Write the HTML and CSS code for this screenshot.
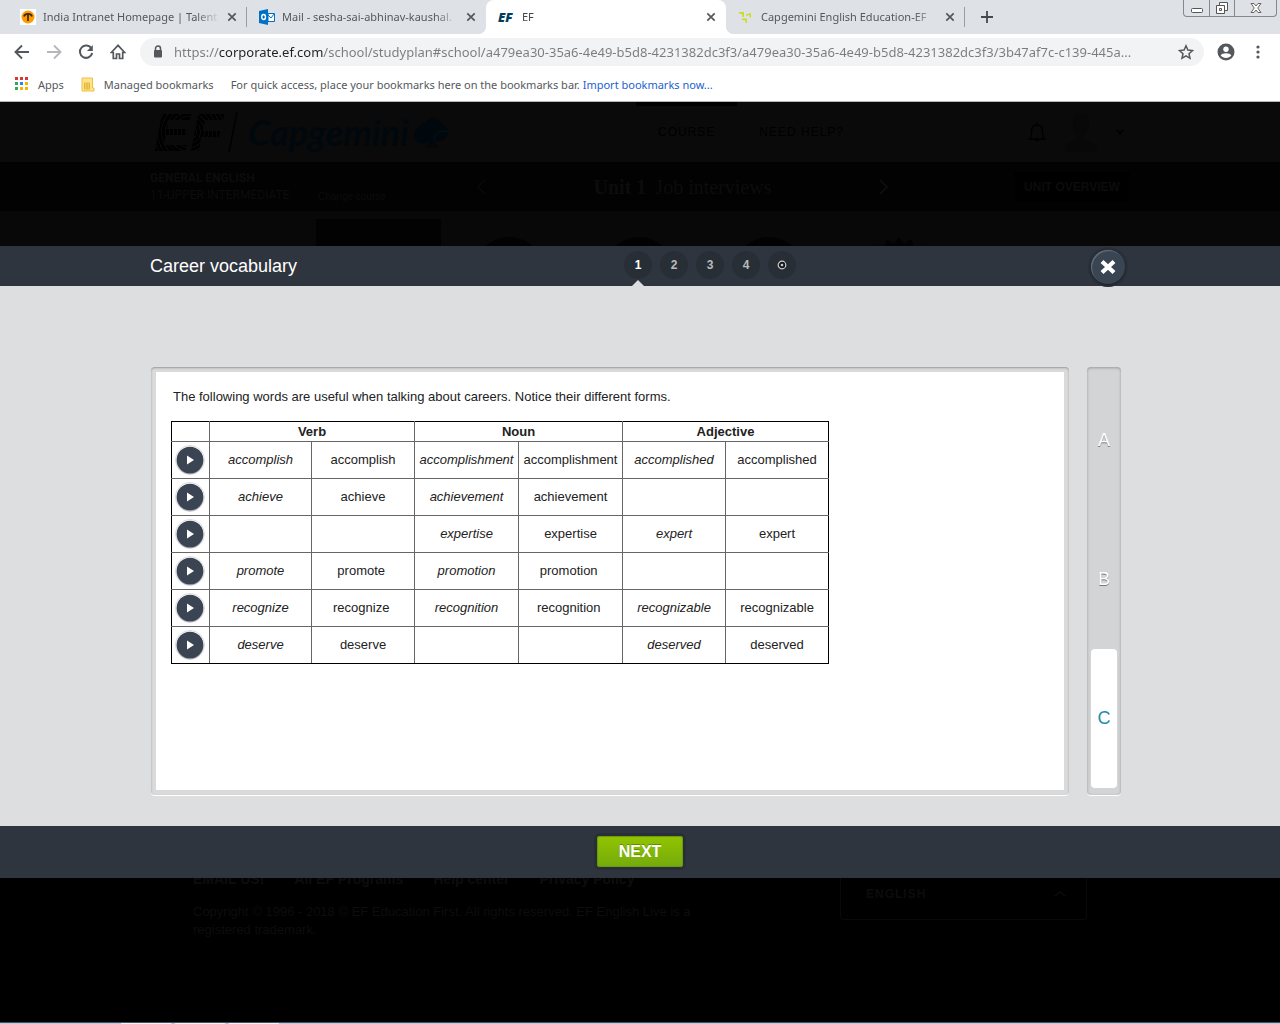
FILE: index.html
```html
<!DOCTYPE html>
<html lang="en">
<head>
<meta charset="utf-8">
<meta name="viewport" content="width=device-width, initial-scale=1">
<title>EF</title>
<link rel="stylesheet" href="styles.css">
</head>
<body>
<svg class="sprite" aria-hidden="true">
  <symbol id="cross" viewBox="0 0 10 10"><path d="M1.3 1.3l7.4 7.4M8.7 1.3L1.3 8.7" fill="none" stroke="#54585c" stroke-width="1.7"/></symbol>
  <symbol id="play" viewBox="0 0 32 32">
    <circle cx="16" cy="16" r="14.5" fill="#fff" stroke="#dcdde0"/>
    <circle cx="16" cy="16.700" r="13.500" fill="#a9adb3"/>
    <circle cx="16" cy="16" r="13.300" fill="#3a4452"/>
    <path d="M13 11.500l7 4.500-7 4.500z" fill="#fff"/>
  </symbol>
</svg>

<header class="browser">
  <div class="tabstrip">
    <div class="tab tab-ruled">
      <svg width="16" height="16" viewBox="0 0 16 16"><path fill="#fff" d="M0 0h16v16H0z"/><circle cx="8" cy="8" r="6.500" fill="#f90"/><path d="M4 7.500c1-3.500 7-3.500 8 0M8 5v7" fill="none" stroke="#3a2a10" stroke-width="1.700"/></svg>
      <span class="tab-title">India Intranet Homepage | Talent</span>
      <button class="tab-close" aria-label="Close tab"><svg width="10" height="10"><use href="#cross"/></svg></button>
    </div>
    <div class="tab">
      <svg width="16" height="16" viewBox="0 0 16 16"><path fill="#fff" stroke="#0072c6" d="M8.500 4.500h7v8h-7z"/><path d="M9 6l3 3 3-4M9 5v7" fill="none" stroke="#0072c6"/><path fill="#0072c6" d="M0 2l9-2v16l-9-2z"/><ellipse cx="4.600" cy="8" rx="1.900" ry="2.500" fill="none" stroke="#fff" stroke-width="1.400"/></svg>
      <span class="tab-title">Mail - sesha-sai-abhinav-kaushal.</span>
      <button class="tab-close" aria-label="Close tab"><svg width="10" height="10"><use href="#cross"/></svg></button>
    </div>
    <div class="tab tab-active">
      <b class="ef-icon">EF</b>
      <span class="tab-title">EF</span>
      <button class="tab-close" aria-label="Close tab"><svg width="10" height="10"><use href="#cross"/></svg></button>
    </div>
    <div class="tab tab-ruled">
      <svg width="16" height="16" viewBox="0 0 16 16"><path fill="#cddc29" d="M1 3h5v5H4.500L4 5 1 4.500zM8 5.500L13 4v4.500h-1.500V6L8 7zM4 9.500h5V14H7.500v-2.500L4 11z"/></svg>
      <span class="tab-title">Capgemini English Education-EF</span>
      <button class="tab-close" aria-label="Close tab"><svg width="10" height="10"><use href="#cross"/></svg></button>
    </div>
    <button class="new-tab" aria-label="New tab"><svg width="12" height="12" viewBox="0 0 12 12"><path d="M6 0v12M0 6h12" stroke="#45494d" stroke-width="1.800"/></svg></button>
    <div class="window-controls">
      <button aria-label="Minimize"><svg width="14" height="16" viewBox="0 0 14 16"><rect x="1.500" y="8.500" width="11" height="4" rx="1" fill="#fff" stroke="#555"/></svg></button>
      <button aria-label="Restore"><svg width="14" height="16" viewBox="0 0 14 16"><g fill="#fff" stroke="#555"><path d="M4.500 2.500h8v8h-8z"/><path d="M1.500 5.500h8v8h-8z"/><path d="M4.500 8.500h2v2h-2z"/></g></svg></button>
      <button class="wide" aria-label="Close window"><svg width="14" height="16" viewBox="0 0 14 16"><path d="M2 3.500h3l2 2.500 2-2.500h3L8.700 8l3.300 4.500H9L7 10l-2 2.500H2L5.300 8z" fill="#fff" stroke="#666"/></svg></button>
    </div>
  </div>

  <div class="toolbar">
    <button aria-label="Back"><svg width="16" height="16" viewBox="0 0 16 16"><path d="M15 8H2M8 1.500L1.500 8 8 14.500" fill="none" stroke="#54585c" stroke-width="1.900"/></svg></button>
    <button aria-label="Forward"><svg width="16" height="16" viewBox="0 0 16 16"><path d="M1 8h13M8 1.500L14.500 8 8 14.500" fill="none" stroke="#b5b7ba" stroke-width="1.900"/></svg></button>
    <button aria-label="Reload"><svg width="16" height="16" viewBox="0 0 16 16"><path d="M13.500 4.500A6.200 6.200 0 1 0 14.200 9" fill="none" stroke="#54585c" stroke-width="2"/><path d="M14.800 1v6H9z" fill="#54585c"/></svg></button>
    <button aria-label="Home"><svg width="16" height="16" viewBox="0 0 16 16"><path d="M8 1.300L1.300 8.500h2v6h3.200v-4.500h3v4.500h3.200v-6h2z" fill="none" stroke="#54585c" stroke-width="1.700"/></svg></button>
    <div class="omnibox">
      <svg width="10" height="14" viewBox="0 0 10 14"><path d="M2.500 6V3.500a2.500 2.500 0 0 1 5 0V6" fill="none" stroke="#54585c" stroke-width="1.500"/><rect x="1" y="5" width="8" height="7.500" rx="1" fill="#54585c"/></svg>
      <input class="url" type="text" aria-label="Address" value="https://corporate.ef.com/school/studyplan#school/a479ea30-35a6-4e49-b5d8-4231382dc3f3/a479ea30-35a6-4e49-b5d8-4231382dc3f3/3b47af7c-c139-445a...">
      <button aria-label="Bookmark this page"><svg width="16" height="16" viewBox="0 0 16 16"><path d="M8 1.800l1.900 4.300 4.600.5-3.500 3.100 1 4.600L8 11.900l-4 2.400 1-4.600L1.500 6.600l4.600-.5z" fill="none" stroke="#54585c" stroke-width="1.500"/></svg></button>
    </div>
    <div class="toolbar-end">
      <button aria-label="Profile"><svg width="18" height="18" viewBox="0 0 18 18"><circle cx="9" cy="9" r="8.500" fill="#54585c"/><circle cx="9" cy="6.300" r="2.700" fill="#fff"/><path d="M3.700 12.500c1-3 9.600-3 10.600 0-2.300 3.300-8.300 3.300-10.600 0z" fill="#fff"/></svg></button>
      <button aria-label="Menu"><svg width="4" height="16" viewBox="0 0 4 16"><g fill="#54585c"><circle cx="2" cy="3" r="1.600"/><circle cx="2" cy="8" r="1.600"/><circle cx="2" cy="13" r="1.600"/></g></svg></button>
    </div>
  </div>

  <nav class="bookmarks">
    <a class="bookmark" href="#"><svg width="14" height="14" viewBox="0 0 14 14"><path fill="#d93a30" d="M0 0h3v3H0zM5 0h3v3H5zM10 0h3v3h-3z"/><path fill="#34a853" d="M0 5h3v3H0zM0 10h3v3H0z"/><path fill="#2a84f0" d="M5 5h3v3H5z"/><path fill="#f5b400" d="M10 5h3v3h-3zM5 10h3v3H5zM10 10h3v3h-3z"/></svg>Apps</a>
    <a class="bookmark" href="#"><svg width="14" height="15" viewBox="0 0 14 15"><path d="M1 1h10.500v10H13v3H1z" fill="#ffe48a" stroke="#ecc14a"/><path d="M3.500 6h5v6h-5zM3.500 8h5M3.500 10h5M6 6v6" fill="none" stroke="#e5b432"/></svg>Managed bookmarks</a>
    <span>For quick access, place your bookmarks here on the bookmarks bar. <a class="import" href="#">Import bookmarks now...</a></span>
  </nav>
</header>

<div class="site-header">
  <div class="wrap site-row">
    <div class="brand">
      <span class="brand-ef">EF</span>
      <svg width="10" height="42" viewBox="0 0 10 42"><path d="M9 1L1 41" stroke="#000" stroke-width="1.500"/></svg>
      <span class="brand-partner">Capgemini</span>
      <svg width="36" height="34" viewBox="0 0 36 34"><path d="M20 1C14 6 1 12 1 21c0 7 9 10 15 5 0 3-1 5-4 6 5 1 11 1 14-1-3-1-5-3-5-6 6 3 14-1 14-8C35 10 25 7 20 1z" fill="#01080d"/><path d="M35 17c-6-3-14 1-14 8" fill="none" stroke="#06121a"/></svg>
    </div>
    <nav class="main-nav">
      <a class="current" href="#">COURSE</a>
      <a href="#">NEED HELP?</a>
    </nav>
    <div class="account">
      <svg width="18" height="20" viewBox="0 0 18 20"><path d="M1.500 17h15c-2-2-2-5-2-8 0-4-2-6-5.500-6S3.500 5 3.500 9c0 3 0 6-2 8zM9 3V0M7 18.500h4" fill="none" stroke="#000" stroke-width="1.300"/></svg>
      <svg width="34" height="40" viewBox="0 0 34 40"><path d="M9 9c0-11 16-11 16 0 0 8-2 12-4 14v5l12 5v7H1v-7l12-5v-5c-2-2-4-6-4-14z" fill="#080808"/></svg>
      <svg width="8" height="6" viewBox="0 0 8 6"><path d="M1 1l3 3 3-3" fill="none" stroke="#000" stroke-width="1.600"/></svg>
    </div>
  </div>
</div>

<div class="unit-bar">
  <div class="wrap unit-row">
    <div class="level"><b>GENERAL ENGLISH</b><span>11-UPPER INTERMEDIATE</span></div>
    <a class="change" href="#">Change course</a>
    <div class="unit-nav">
      <svg width="10" height="16" viewBox="0 0 10 16"><path d="M9 1L2 8l7 7" fill="none" stroke="#070707" stroke-width="2"/></svg>
      <span class="unit-title"><b>Unit 1</b> Job interviews</span>
      <svg width="10" height="16" viewBox="0 0 10 16"><path d="M1 1l7 7-7 7" fill="none" stroke="#0d0d0d" stroke-width="2"/></svg>
    </div>
    <button class="overview">UNIT OVERVIEW</button>
  </div>
</div>

<div class="lesson-strip">
  <div class="wrap strip-row">
    <i class="thumb"></i>
    <i class="disc"></i>
    <i class="disc"></i>
    <i class="disc"></i>
    <svg width="70" height="70" viewBox="-35 -35 70 70"><path d="M0-35L5-28 12-33 15-25 23-27 24-18 33-12 26 0V35H-26V0L-33-12-24-18-23-27-15-25-12-33-5-28z" fill="#020202"/></svg>
  </div>
</div>

<main class="lesson">
  <div class="lesson-head">
    <div class="wrap head-row">
      <h1>Career vocabulary</h1>
      <nav class="steps" aria-label="Steps">
        <button class="on">1</button>
        <button>2</button>
        <button>3</button>
        <button>4</button>
        <button aria-label="Finish"><svg width="10" height="10" viewBox="0 0 10 10"><circle cx="5" cy="5" r="3.800" fill="#14181d" stroke="#ccc" stroke-width="1.200"/><circle cx="5" cy="5" r="1.300" fill="#ccc"/></svg></button>
      </nav>
      <button class="lesson-close" aria-label="Close"><svg width="18" height="18" viewBox="0 0 18 18"><path d="M3 3.500l12 11M15 3.500l-12 11" stroke="#fff" stroke-width="4.200"/></svg></button>
    </div>
  </div>

  <div class="lesson-body">
    <div class="wrap body-row">
      <section class="panel">
        <div class="paper">
          <p>The following words are useful when talking about careers. Notice their different forms.</p>
          <table>
            <colgroup><col class="c-play"><col class="c-verb"><col class="c-std"><col class="c-noun"><col class="c-noun"><col class="c-std"><col class="c-std"></colgroup>
            <thead>
              <tr><td></td><th colspan="2">Verb</th><th colspan="2">Noun</th><th colspan="2">Adjective</th></tr>
            </thead>
            <tbody>
              <tr><td><button class="play" aria-label="Play accomplish"><svg width="32" height="32"><use href="#play"/></svg></button></td><td><em>accomplish</em></td><td>accomplish</td><td><em>accomplishment</em></td><td>accomplishment</td><td><em>accomplished</em></td><td>accomplished</td></tr>
              <tr><td><button class="play" aria-label="Play achieve"><svg width="32" height="32"><use href="#play"/></svg></button></td><td><em>achieve</em></td><td>achieve</td><td><em>achievement</em></td><td>achievement</td><td></td><td></td></tr>
              <tr><td><button class="play" aria-label="Play expertise"><svg width="32" height="32"><use href="#play"/></svg></button></td><td></td><td></td><td><em>expertise</em></td><td>expertise</td><td><em>expert</em></td><td>expert</td></tr>
              <tr><td><button class="play" aria-label="Play promote"><svg width="32" height="32"><use href="#play"/></svg></button></td><td><em>promote</em></td><td>promote&nbsp;</td><td><em>promotion</em></td><td>promotion&nbsp;</td><td></td><td></td></tr>
              <tr><td><button class="play" aria-label="Play recognize"><svg width="32" height="32"><use href="#play"/></svg></button></td><td><em>recognize</em></td><td>recognize&nbsp;</td><td><em>recognition</em></td><td>recognition&nbsp;</td><td><em>recognizable</em></td><td>recognizable</td></tr>
              <tr><td><button class="play" aria-label="Play deserve"><svg width="32" height="32"><use href="#play"/></svg></button></td><td><em>deserve</em></td><td>deserve</td><td></td><td></td><td><em>deserved</em></td><td>deserved</td></tr>
            </tbody>
          </table>
        </div>
      </section>
      <nav class="rail" aria-label="Parts">
        <button>A</button>
        <button>B</button>
        <button class="on">C</button>
      </nav>
    </div>
  </div>

  <div class="lesson-foot"><button class="next">NEXT</button></div>
</main>

<footer class="site-footer">
  <div class="wrap footer-row">
    <div class="legal">
      <nav><a href="#">EMAIL US!</a><a href="#">All EF Programs</a><a href="#">Help center</a><a href="#">Privacy Policy</a></nav>
      <p>Copyright © 1996 - 2018 © EF Education First. All rights reserved. EF English Live is a registered trademark.</p>
    </div>
    <div class="language">
      <select aria-label="Language"><option>ENGLISH</option></select>
      <svg width="12" height="6" viewBox="0 0 12 6"><path d="M1 5l5-4 5 4" fill="none" stroke="#0c0c0c" stroke-width="1.500"/></svg>
    </div>
  </div>
</footer>
<div class="taskbar"><i></i><i></i><i></i></div>
</body>
</html>
```
FILE: styles.css
```css
* { box-sizing: border-box; }

body {
  margin: 0;
  min-height: 100vh;
  display: flex;
  flex-direction: column;
  background: #000;
  font-family: "Liberation Sans", Arial, sans-serif;
  font-size: 13px;
  color: #222;
}

button {
  display: flex;
  align-items: center;
  justify-content: center;
  padding: 0;
  border: 0;
  background: none;
  font: inherit;
  color: inherit;
}

svg { display: block; flex: none; }
a { color: inherit; text-decoration: none; }
.sprite { position: absolute; width: 0; height: 0; }

.wrap {
  width: 100%;
  max-width: 980px;
  margin: 0 auto;
}

/* Browser window */
.browser {
  background: #fff;
  border-bottom: 1px solid #b6b6b8;
  font-family: "Noto Sans", sans-serif;
  font-size: 11px;
  color: #54585c;
}

.tabstrip {
  display: flex;
  height: 34px;
  padding: 0 3px 0 8px;
  background: #dee1e6;
}

.tab {
  position: relative;
  display: flex;
  flex: 0 1 239px;
  min-width: 0;
  align-items: center;
  gap: 7px;
  padding: 0 10px 0 12px;
}

.tab-ruled::after {
  content: "";
  position: absolute;
  right: 0;
  top: 7px;
  height: 20px;
  border-right: 1px solid #9a9da1;
}

.tab-title {
  flex: 1;
  min-width: 0;
  overflow: hidden;
  white-space: nowrap;
  line-height: 20px;
  -webkit-mask-image: linear-gradient(to left, transparent, #000 24px);
  mask-image: linear-gradient(to left, transparent, #000 24px);
}

.tab-active {
  flex-basis: 240px;
  background: #fff;
  border-radius: 8px 8px 0 0;
  color: #45494d;
}

.tab-active::before,
.tab-active::after {
  content: "";
  position: absolute;
  bottom: 0;
  width: 8px;
  height: 8px;
}

.tab-active::before {
  right: 100%;
  background: radial-gradient(circle at 0 0, transparent 8px, #fff 8px);
}

.tab-active::after {
  left: 100%;
  background: radial-gradient(circle at 100% 0, transparent 8px, #fff 8px);
}

.ef-icon {
  width: 17px;
  font: italic 900 13px/16px "Open Sans", sans-serif;
  color: #003e5c;
}

.new-tab { width: 44px; }

.window-controls {
  display: flex;
  height: 17px;
  margin-left: auto;
  border: 1px solid #85888c;
  border-top: 0;
  border-radius: 0 0 4px 4px;
}

.window-controls button { width: 25px; }
.window-controls button + button { border-left: 1px solid #85888c; }
.window-controls .wide { width: 42px; }

.toolbar {
  display: flex;
  align-items: center;
  gap: 16px;
  height: 36px;
  padding: 0 20px 0 14px;
}

.omnibox {
  display: flex;
  flex: 1;
  min-width: 0;
  align-items: center;
  gap: 11px;
  height: 28px;
  margin: 0 -3px 0 -2px;
  padding: 0 10px 0 13px;
  border-radius: 14px;
  background: #f1f3f4;
}

.url {
  flex: 1;
  min-width: 0;
  padding: 0;
  border: 0;
  font: 13px/20px "Noto Sans", sans-serif;
  color: transparent;
  background: linear-gradient(to right, #777c81 45px, #202124 45px, #202124 149px, #777c81 149px);
  -webkit-background-clip: text;
  background-clip: text;
}

.toolbar-end { display: flex; align-items: center; gap: 21px; }

.bookmarks {
  display: flex;
  align-items: center;
  gap: 17px;
  height: 31px;
  padding: 0 15px 3px;
  white-space: nowrap;
}

.bookmark { display: flex; align-items: center; gap: 9px; }
.import { color: #1a62d0; }

/* Dimmed course page */
.site-header { background: #0a0a0a; }

.site-row { display: flex; height: 60px; }

.brand {
  display: flex;
  flex: 0 0 486px;
  align-items: center;
  gap: 4px;
  padding-left: 4px;
}

.brand-ef {
  width: 70px;
  font: italic 700 54px/58px "Liberation Sans", sans-serif;
  color: transparent;
  background: repeating-radial-gradient(circle at 50% 50%, #000 0 3px, #0a0a0a 3px 4px);
  -webkit-background-clip: text;
  background-clip: text;
}

.brand-partner {
  padding-left: 6px;
  font: italic 700 36px/40px Lato, sans-serif;
  color: #01080d;
}

.main-nav { display: flex; color: #000; }

.main-nav a {
  padding: 0 22px;
  line-height: 60px;
  letter-spacing: 1px;
  font-size: 12px;
}

.main-nav .current { box-shadow: inset 0 4px #000; }

.account {
  display: flex;
  align-items: center;
  gap: 18px;
  margin-left: auto;
  padding-right: 6px;
}

.unit-bar { background: #020202; color: #0c0c0c; }

.unit-row {
  display: flex;
  align-items: center;
  height: 49px;
}

.level {
  display: flex;
  flex-direction: column;
  width: 168px;
  font: 12px/17px Roboto, sans-serif;
}

.change { width: 158px; padding-top: 20px; font-size: 10px; }

.unit-nav {
  display: flex;
  flex: 1;
  align-items: center;
  justify-content: space-between;
  margin-right: 125px;
}

.unit-title { font: 20px/24px "Liberation Serif", serif; }
.unit-title b { margin-right: 4px; }

.overview {
  width: 116px;
  height: 30px;
  background: #000;
  font-size: 12px;
  font-weight: 700;
  color: #0c0c0c;
}

.lesson-strip { background: #080808; }

.strip-row {
  display: flex;
  gap: 60px;
  height: 35px;
  padding-left: 166px;
  overflow: hidden;
}

.thumb { flex: none; width: 125px; margin: 8px -27px 0 0; background: #020202; }

.disc {
  flex: none;
  width: 70px;
  height: 70px;
  margin-top: 26px;
  border-radius: 50%;
  background: #020202;
}

.strip-row svg { margin-top: 26px; }

/* Lesson */
.lesson-head { background: #2f353f; }

.head-row {
  display: grid;
  grid-template-columns: 474px 1fr auto;
  align-items: center;
  height: 40px;
  padding-right: 4px;
}

h1 {
  margin: 0;
  font-size: 18px;
  font-weight: 400;
  color: #fff;
}

.steps {
  display: flex;
  gap: 8px;
  height: 40px;
  padding-top: 5px;
}

.steps button {
  position: relative;
  width: 28px;
  height: 28px;
  border-radius: 50%;
  background: #282e36;
  font-size: 12px;
  font-weight: 700;
  color: #b9bbbd;
}

.steps .on { color: #fff; }

.steps .on::after {
  content: "";
  position: absolute;
  left: 8px;
  top: 29px;
  border: 6px solid transparent;
  border-top: 0;
  border-bottom-color: #dddee0;
}

.lesson-close {
  width: 34px;
  height: 34px;
  margin: 2px 1px 0 0;
  border-radius: 50%;
  background: #3a4553;
  box-shadow: inset 1px 1px 1px #68717d, 0 1px 2px #1b2027, 0 0 0 3px #2a3039;
}

.lesson-body { background: #dddee0; }

.body-row {
  display: flex;
  gap: 18px;
  min-height: 540px;
  padding: 81px 9px 31px 1px;
}

.panel {
  flex: 1;
  display: flex;
  min-width: 0;
  padding: 5px;
  border-radius: 4px;
  background: #dadada;
  box-shadow: inset 0 1px 2px #999, 0 1px #fff;
}

.paper { flex: 1; min-width: 0; padding: 15px; background: #fff; }
.paper p { margin: 0 2px 14px; line-height: 20px; }

table {
  width: 658px;
  table-layout: fixed;
  border-collapse: collapse;
}

th, td {
  padding: 0;
  border: 1px solid #666;
  text-align: center;
  line-height: 18px;
}

thead td, thead th { border-top-color: #000; }
tr > :first-child { border-left-color: #000; }
tr > :last-child { border-right-color: #000; }
tbody tr:last-child td { border-bottom-color: #000; }

thead tr { height: 20px; }
tbody tr { height: 37px; }
.c-play { width: 38px; }
.c-verb { width: 102px; }
.c-std { width: 103px; }
.c-noun { width: 104px; }
.play { width: 36px; height: 36px; }

.rail {
  display: flex;
  flex-direction: column;
  width: 34px;
  padding: 4px 4px 7px;
  border-radius: 4px;
  background: #d3d4d6;
  box-shadow: inset 0 1px 3px #999, 0 1px #fff;
}

.rail button {
  flex: 1;
  font-size: 18px;
  color: #fff;
  text-shadow: 0 1px #777;
}

.rail .on {
  border-radius: 4px;
  background: #fff;
  color: #1e8db0;
  text-shadow: none;
}

.lesson-foot {
  display: flex;
  justify-content: center;
  height: 52px;
  padding-top: 10px;
  background: #2f353f;
}

.next {
  width: 86px;
  height: 31px;
  border-radius: 3px;
  background: linear-gradient(#92c400, #74ab0c);
  box-shadow: inset 0 0 1px 1px #6b990a, 0 0 0 3px #292f38;
  font-size: 16px;
  font-weight: 700;
  color: #fff;
  text-shadow: 0 -1px #5f8a08;
}

/* Footer under the lesson */
.site-footer { flex: 1; color: #0d0d0d; }

.footer-row {
  display: flex;
  justify-content: space-between;
  padding: 0 43px;
}

.legal { width: 508px; }

.legal nav {
  display: flex;
  align-items: flex-end;
  gap: 30px;
  height: 9px;
  overflow: hidden;
  font-size: 14px;
  font-weight: 700;
  line-height: 16px;
  white-space: nowrap;
}

.legal p { margin: 16px 0 0; line-height: 18px; }

.language {
  display: flex;
  align-items: center;
  width: 247px;
  height: 42px;
  padding: 0 20px 10px 25px;
  border: 1px solid #0a0a0a;
  border-top: 0;
  border-radius: 0 0 4px 4px;
}

.language select {
  flex: 1;
  appearance: none;
  padding: 0;
  border: 0;
  background: none;
  font: 700 12px/16px "Liberation Sans", sans-serif;
  letter-spacing: 1px;
  color: #0c0c0c;
}

.taskbar {
  display: flex;
  gap: 4px;
  height: 2px;
  padding-left: 121px;
  border-top: 1px solid #445466;
  background: #b9cbdc;
}

.taskbar i { width: 50px; background: #f4f4f4; }
```
